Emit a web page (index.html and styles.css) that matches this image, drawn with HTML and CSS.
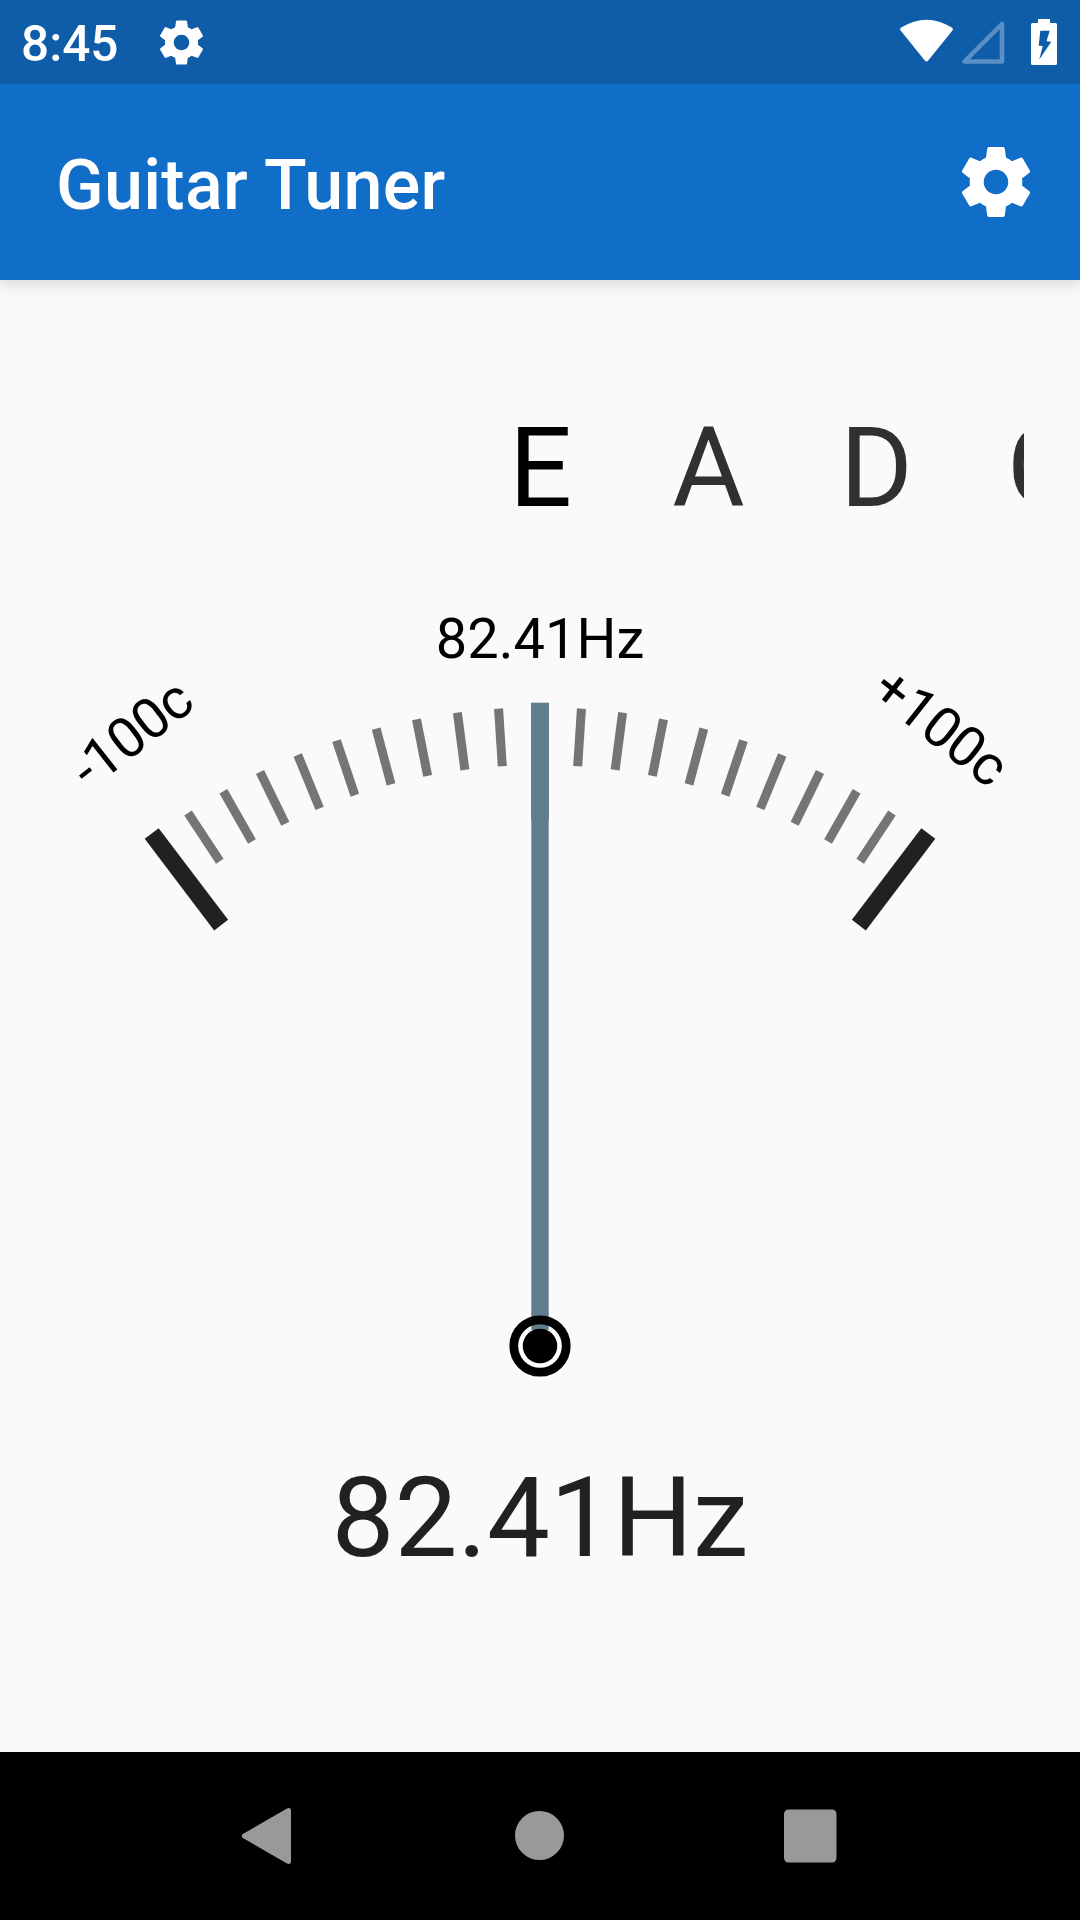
FILE: index.html
```html
<!DOCTYPE html>
<html lang="en">
<head>
    <meta charset="UTF-8">
    <meta name="viewport" content="width=device-width, initial-scale=1.0">
    <title>Guitar Tuner</title>
    <link rel="stylesheet" href="styles.css">
</head>
<body>

    <!-- Shared icons -->
    <svg class="defs">
        <symbol id="gear" viewBox="0 0 24 24">
            <path d="M19.43 12.98c.04-.32.07-.64.07-.98s-.03-.66-.07-.98l2.11-1.65c.19-.15.24-.42.12-.64l-2-3.46c-.12-.22-.39-.3-.61-.22l-2.49 1c-.52-.4-1.08-.73-1.69-.98l-.38-2.65C14.46 2.18 14.25 2 14 2h-4c-.25 0-.46.18-.49.42l-.38 2.65c-.61.25-1.17.59-1.69.98l-2.49-1c-.23-.09-.49 0-.61.22l-2 3.46c-.13.22-.07.49.12.64l2.11 1.65c-.04.32-.07.65-.07.98s.03.66.07.98l-2.11 1.65c-.19.15-.24.42-.12.64l2 3.46c.12.22.39.3.61.22l2.49-1c.52.4 1.08.73 1.69.98l.38 2.65c.03.24.24.42.49.42h4c.25 0 .46-.18.49-.42l.38-2.65c.61-.25 1.17-.59 1.69-.98l2.49 1c.23.09.49 0 .61-.22l2-3.46c.12-.22.07-.49-.12-.64l-2.11-1.65zM12 15.5c-1.93 0-3.5-1.57-3.5-3.5s1.57-3.5 3.5-3.5 3.5 1.57 3.5 3.5-1.57 3.5-3.5 3.5z"/>
        </symbol>
        <line id="tick" x1="540" y1="147.3" x2="540" y2="205"/>
        <line id="limit" x1="540" y1="143" x2="540" y2="258"/>
    </svg>

    <!-- Status bar -->
    <div class="status-bar">
        <span class="time">8:45</span>
        <svg class="status-gear"><use href="#gear"/></svg>
        <svg class="status-icons" viewBox="0 0 160 84">
            <path class="solid" d="M1.2 27.6Q26.5 11.8 51.8 27.6Q53.6 28.8 52.4 30.4L28.2 60.6Q26.5 62.6 24.8 60.6L0.6 30.4Q-0.6 28.8 1.2 27.6Z"/>
            <path class="signal" d="M102 24V61.5H64.5Z"/>
            <path class="solid" fill-rule="evenodd" d="M138 19H150V23H155.5Q157 23 157 24.5V63.5Q157 65 155.5 65H132.5Q131 65 131 63.5V24.5Q131 23 132.5 23H138ZM140.3 30.7L138.7 45.7L142.7 46L139.3 59.5L151.3 41.7L146.5 41.3L149.7 30.7Z"/>
        </svg>
    </div>

    <!-- App bar -->
    <header class="app-bar">
        <h1>Guitar Tuner</h1>
        <svg class="settings"><use href="#gear"/></svg>
    </header>

    <main class="tuner">
        <!-- String picker, selected note in the middle -->
        <div class="notes">
            <span class="note selected">E</span>
            <span class="note">A</span>
            <span class="note">D</span>
            <span class="note">G</span>
        </div>

        <!-- Gauge, pivot at 540,786 -->
        <svg class="gauge" viewBox="0 0 1080 860">
            <text class="label" x="540" y="98" text-anchor="middle">82.41Hz</text>
            <text class="label side" transform="translate(90 231) rotate(-38.3)">-100c</text>
            <text class="label side" transform="translate(869 134.5) rotate(38.3)">+100c</text>

            <g class="ticks">
                <use href="#tick" transform="rotate(-33.44 540 786)"/>
                <use href="#tick" transform="rotate(-29.72 540 786)"/>
                <use href="#tick" transform="rotate(-26 540 786)"/>
                <use href="#tick" transform="rotate(-22.29 540 786)"/>
                <use href="#tick" transform="rotate(-18.58 540 786)"/>
                <use href="#tick" transform="rotate(-14.86 540 786)"/>
                <use href="#tick" transform="rotate(-11.15 540 786)"/>
                <use href="#tick" transform="rotate(-7.43 540 786)"/>
                <use href="#tick" transform="rotate(-3.72 540 786)"/>
                <use href="#tick" transform="rotate(3.72 540 786)"/>
                <use href="#tick" transform="rotate(7.43 540 786)"/>
                <use href="#tick" transform="rotate(11.15 540 786)"/>
                <use href="#tick" transform="rotate(14.86 540 786)"/>
                <use href="#tick" transform="rotate(18.58 540 786)"/>
                <use href="#tick" transform="rotate(22.29 540 786)"/>
                <use href="#tick" transform="rotate(26 540 786)"/>
                <use href="#tick" transform="rotate(29.72 540 786)"/>
                <use href="#tick" transform="rotate(33.44 540 786)"/>
            </g>
            <g class="limits">
                <use href="#limit" transform="rotate(-37.15 540 786)"/>
                <use href="#limit" transform="rotate(37.15 540 786)"/>
            </g>

            <circle class="ring-gap" cx="540" cy="786" r="24"/>
            <rect class="needle" x="531" y="142.7" width="18" height="116.3"/>
            <rect class="needle" x="531.3" y="250" width="17.4" height="520"/>
            <circle class="ring" cx="540" cy="786" r="26.2"/>
            <circle class="hub" cx="540" cy="786" r="17.3"/>
        </svg>

        <div class="frequency">82.41Hz</div>
    </main>

    <!-- Navigation bar -->
    <nav class="nav-bar">
        <svg viewBox="0 0 60 60"><path d="M2.4 28.3L47 2.4Q51 0.8 51 5V55Q51 59.2 47 57.6L2.4 31.7Q1 30 2.4 28.3Z"/></svg>
        <svg viewBox="0 0 60 60"><circle cx="29.5" cy="29.5" r="24.5"/></svg>
        <svg viewBox="0 0 60 60"><rect x="4" y="3.5" width="52.5" height="53" rx="4.5"/></svg>
    </nav>

</body>
</html>
```
FILE: styles.css
```css
* {
    box-sizing: border-box;
    margin: 0;
    padding: 0;
}

body {
    display: flex;
    flex-direction: column;
    width: 1080px;
    height: 1920px;
    background: #fafafa;
    font-family: Roboto, sans-serif;
    overflow: hidden;
}

.defs {
    position: absolute;
    width: 0;
    height: 0;
}

/* Status bar */
.status-bar {
    display: flex;
    align-items: center;
    flex: none;
    height: 84px;
    padding: 0 20px 0 21px;
    background: #0f5ca8;
    color: #fff;
    z-index: 1;
}

.time {
    width: 134px;
    padding-top: 4px;
    font-size: 49.5px;
    font-weight: 500;
}

.status-gear {
    width: 53px;
    height: 53px;
    fill: #fff;
}

.status-icons {
    width: 160px;
    height: 84px;
    margin-left: auto;
}

.solid {
    fill: #fff;
}

.signal {
    fill: none;
    stroke: #5a90c6;
    stroke-width: 4.5;
    stroke-linejoin: round;
}

/* App bar */
.app-bar {
    display: flex;
    align-items: center;
    justify-content: space-between;
    flex: none;
    height: 196px;
    padding: 0 42px 0 56px;
    background: #116ec8;
    color: #fff;
    box-shadow: 0 3px 16px rgba(0, 0, 0, 0.16);
}

h1 {
    padding-top: 6px;
    font-size: 70px;
    font-weight: 500;
    letter-spacing: 0.3px;
}

.settings {
    width: 84px;
    height: 84px;
    fill: #fff;
}

.tuner {
    flex: 1;
    display: flex;
    flex-direction: column;
}

/* String picker */
.notes {
    display: flex;
    flex: none;
    height: 160px;
    margin: 108px 56px 12px;
    padding-left: 400.5px;
    overflow: hidden;
}

.note {
    flex: none;
    width: 168px;
    text-align: center;
    font-size: 111px;
    line-height: 160px;
    color: #303030;
}

.note.selected {
    color: #000;
}

/* Gauge */
.gauge {
    flex: none;
    width: 1080px;
    height: 860px;
}

.label {
    font-size: 56px;
    fill: #000;
}

.label.side {
    letter-spacing: -0.6px;
}

.ticks {
    stroke: #757575;
    stroke-width: 9;
}

.limits {
    stroke: #212121;
    stroke-width: 17.5;
}

.needle {
    fill: #607d8b;
}

.ring-gap {
    fill: #fff;
}

.ring {
    fill: none;
    stroke: #000;
    stroke-width: 8.8;
}

.hub {
    fill: #000;
}

.frequency {
    padding-top: 33px;
    text-align: center;
    font-size: 112px;
    line-height: 130px;
    color: #212121;
}

/* Navigation bar */
.nav-bar {
    display: flex;
    align-items: center;
    justify-content: center;
    gap: 210px;
    flex: none;
    height: 168px;
    background: #000;
}

.nav-bar svg {
    width: 60px;
    height: 60px;
    fill: #999;
}
```
